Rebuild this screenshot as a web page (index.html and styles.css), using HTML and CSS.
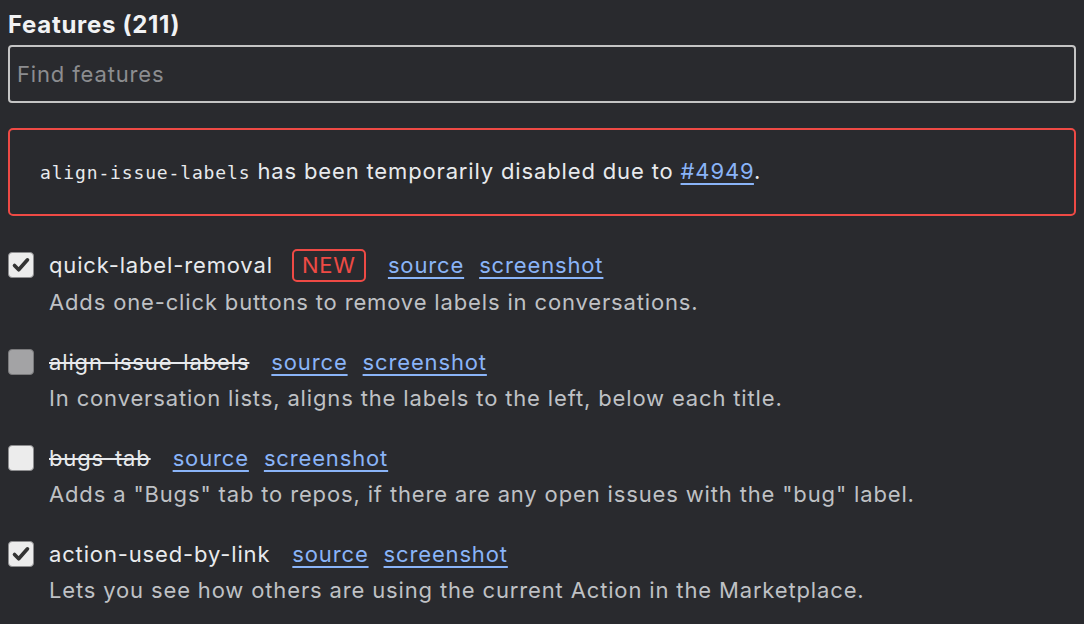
FILE: index.html
```html
<!DOCTYPE html>
<html>
<head>
<meta charset="utf-8">
<link rel="stylesheet" href="styles.css">
</head>
<body>
<h2 class="heading">Features (211)</h2>
<input class="search" type="text" placeholder="Find features">
<div class="alert"><code class="mono">align-issue-labels</code> has been temporarily disabled due to <a class="link" href="#">#4949</a>.</div>

<div class="feature feature-first">
  <div class="title-row">
    <span class="box checked"><svg viewBox="0 0 26 26" width="26" height="26"><path d="M6.5 13.5l4.2 4.3 8.8-10" fill="none" stroke="#333" stroke-width="3.6" stroke-linecap="round" stroke-linejoin="round"/></svg></span>
    <span class="name">quick-label-removal</span>
    <span class="badge">NEW</span>
    <a class="link first" href="#">source</a>
    <a class="link" href="#">screenshot</a>
  </div>
  <div class="desc">Adds one-click buttons to remove labels in conversations.</div>
</div>

<div class="feature">
  <div class="title-row">
    <span class="box disabled"></span>
    <span class="name off">align-issue-labels</span>
    <a class="link first" href="#">source</a>
    <a class="link" href="#">screenshot</a>
  </div>
  <div class="desc">In conversation lists, aligns the labels to the left, below each title.</div>
</div>

<div class="feature">
  <div class="title-row">
    <span class="box"></span>
    <span class="name off">bugs-tab</span>
    <a class="link first" href="#">source</a>
    <a class="link" href="#">screenshot</a>
  </div>
  <div class="desc">Adds a "Bugs" tab to repos, if there are any open issues with the "bug" label.</div>
</div>

<div class="feature">
  <div class="title-row">
    <span class="box checked"><svg viewBox="0 0 26 26" width="26" height="26"><path d="M6.5 13.5l4.2 4.3 8.8-10" fill="none" stroke="#333" stroke-width="3.6" stroke-linecap="round" stroke-linejoin="round"/></svg></span>
    <span class="name">action-used-by-link</span>
    <a class="link first" href="#">source</a>
    <a class="link" href="#">screenshot</a>
  </div>
  <div class="desc">Lets you see how others are using the current Action in the Marketplace.</div>
</div>
</body>
</html>
```

FILE: styles.css
```css
html, body {
  background: #292a2e;
}
body {
  margin: 8px;
  color: #e8eaed;
  font-family: Inter, "Noto Sans", sans-serif;
  font-size: 22px;
  letter-spacing: 0.85px;
}
.heading {
  margin: 0;
  padding-top: 3px;
  font-size: 24px;
  font-weight: 700;
  line-height: 28px;
  letter-spacing: 0.7px;
  color: #f1f2f4;
}
.search {
  display: block;
  box-sizing: border-box;
  width: 100%;
  height: 58px;
  margin-top: 6px;
  padding: 0 7px;
  background: transparent;
  border: 2px solid #c4c4c4;
  border-radius: 4px;
  color: #e8eaed;
  font-family: Inter, "Noto Sans", sans-serif;
  font-size: 22px;
  letter-spacing: 0.85px;
  outline: none;
}
.search::placeholder {
  color: #8c8d90;
}
.alert {
  margin-top: 25px;
  border: 2px solid #ee4a45;
  border-radius: 5px;
  padding: 28px 30px;
  line-height: 27px;
}
.mono {
  font-family: "DejaVu Sans Mono", "Liberation Mono", monospace;
  font-size: 18px;
  letter-spacing: 0.85px;
  color: #e8eaed;
}
.link {
  color: #8ab4f8;
  text-decoration: underline;
  text-underline-offset: 4px;
  text-decoration-thickness: 2px;
}
.feature {
  margin-top: 24px;
}
.feature.feature-first {
  margin-top: 30px;
}
.feature-first .title-row {
  height: 38px;
}
.title-row {
  display: flex;
  align-items: center;
  height: 36px;
}
.box {
  box-sizing: border-box;
  width: 26px;
  height: 26px;
  border: 1.5px solid #8d8d8f;
  border-radius: 4px;
  background: #ececec;
  margin-right: 15px;
  display: flex;
  align-items: center;
  justify-content: center;
}
.box svg {
  flex: none;
}
.box.disabled {
  background: #a3a3a5;
  border-color: #7a7a7c;
}
.name {
  line-height: 36px;
}
.name.off {
  text-decoration: line-through;
  text-decoration-thickness: 2px;
}
.badge {
  box-sizing: border-box;
  height: 33px;
  margin-left: 19px;
  padding: 0 8px;
  border: 2px solid #ee4a45;
  border-radius: 5px;
  color: #ee4a45;
  display: flex;
  align-items: center;
}
.link.first {
  margin-left: 22px;
}
.link + .link {
  margin-left: 15px;
}
.desc {
  margin-left: 41px;
  line-height: 36px;
  color: #bfc1c5;
}
```
